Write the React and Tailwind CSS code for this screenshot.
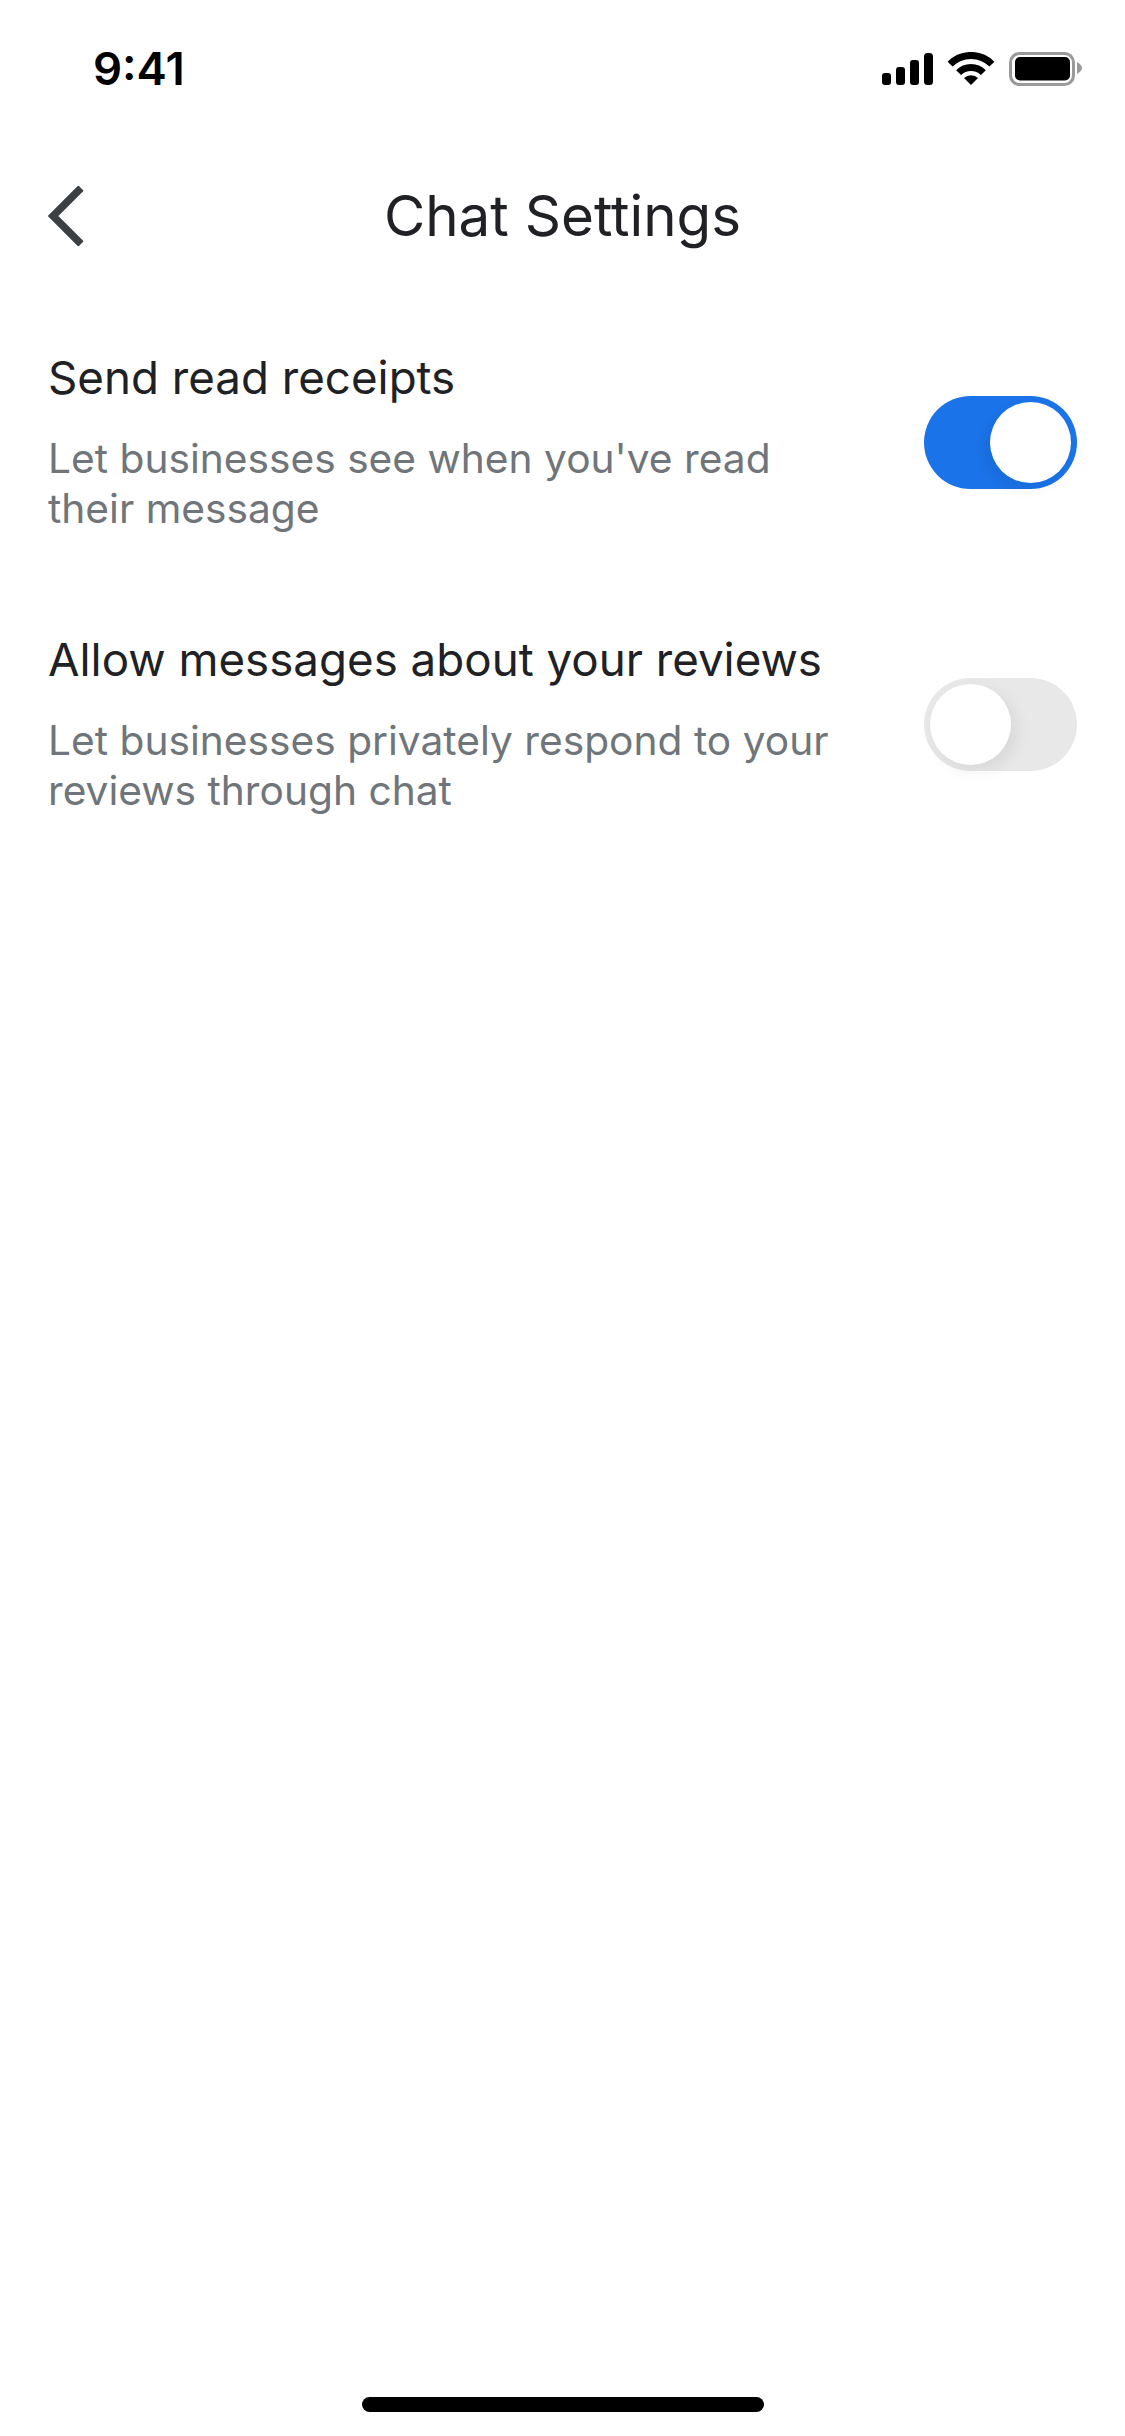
import React from "react";

function Toggle({ on }) {
  return (
    <div className={"shrink-0 w-[153px] h-[93px] rounded-full flex items-center px-[6px] " + (on ? "bg-[#1a73e8] justify-end" : "bg-[#e8e8e8] justify-start")}>
      <div className={"w-[81px] h-[81px] rounded-full bg-white " + (on ? "shadow-[-6px_6px_14px_rgba(0,0,0,0.06)]" : "shadow-[6px_6px_16px_rgba(0,0,0,0.07)]")} />
    </div>
  );
}

function Row({ title, sub, on, className }) {
  return (
    <div className={"flex items-start justify-between " + className}>
      <div className="w-[800px]">
        <div className="text-[45.7px] leading-[60px] text-[#202124]">{title}</div>
        <div className="mt-[26px] text-[40.7px] leading-[50px] text-[#70757a]">{sub[0]}<br />{sub[1]}</div>
      </div>
      <div className="mt-[48px]"><Toggle on={on} /></div>
    </div>
  );
}

export default function App() {
  return (
    <div className="relative w-[1125px] h-[2436px] bg-white overflow-hidden flex flex-col font-['Inter',sans-serif]">
      <div className="h-[136px] flex items-start justify-between pl-[93px] pr-[40px] pt-[41px]">
        <div className="text-[45.5px] leading-[56px] font-semibold text-black">9:41</div>
        <svg width="205" height="36" viewBox="0 0 205 36" className="mt-[11px]" fill="black">
          <rect x="2" y="21" width="9" height="12" rx="3" />
          <rect x="16" y="15" width="9" height="18" rx="3" />
          <rect x="30" y="8" width="9" height="25" rx="3" />
          <rect x="44" y="1" width="9" height="32" rx="3.5" />
          <path d="M70.1 12.1 A29.5 29.5 0 0 1 111.9 12.1" fill="none" stroke="black" strokeWidth="7" />
          <path d="M78.6 20.6 A17.5 17.5 0 0 1 103.4 20.6" fill="none" stroke="black" strokeWidth="7" />
          <path d="M91 33 L84 26 A10 10 0 0 1 98 26 Z" />
          <rect x="130.5" y="1.5" width="63" height="31" rx="9" fill="none" stroke="#9a9a9a" strokeWidth="3" />
          <rect x="135" y="5" width="55" height="23.5" rx="5" />
          <path d="M197 10 Q202 13 202 16 Q202 19 197 22 Z" fill="#9a9a9a" />
        </svg>
      </div>
      <div className="relative h-[160px] flex items-center justify-center">
        <svg width="36" height="60" viewBox="0 0 36 60" className="absolute left-[48px] top-[50px]" fill="none" stroke="#3c4043" strokeWidth="7.5" strokeLinecap="butt" strokeLinejoin="miter">
          <path d="M33 2 L5 30 L33 58" />
        </svg>
        <div className="text-[56.5px] leading-[72px] text-[#202124]">Chat Settings</div>
      </div>
      <div className="pl-[48px] pr-[48px] pt-[52px]">
        <Row title="Send read receipts" sub={["Let businesses see when you've read", "their message"]} on />
        <Row className="mt-[96px]" title="Allow messages about your reviews" sub={["Let businesses privately respond to your", "reviews through chat"]} />
      </div>
      <div className="absolute left-[362px] top-[2397px] w-[402px] h-[15px] rounded-full bg-black" />
    </div>
  );
}
